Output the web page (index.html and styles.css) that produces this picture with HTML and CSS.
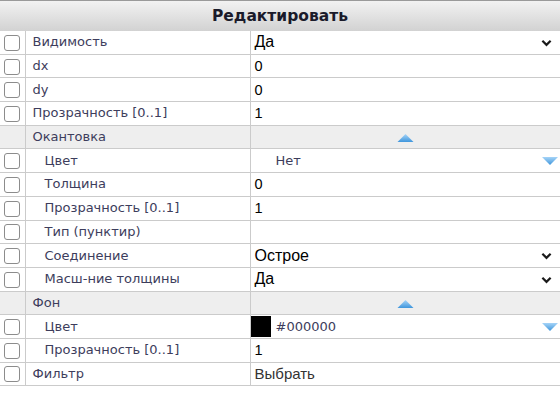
FILE: index.html
```html
<!DOCTYPE html>
<html>
<head>
    <title>Редактировать</title>
    <link rel="stylesheet" href="styles.css">
</head>
<body>
    <div class="panel">
        <div class="title">Редактировать</div>
        <table class="grid">
            <colgroup>
                <col class="c-chk">
                <col class="c-name">
                <col>
            </colgroup>
            <tr>
                <td class="chk"><span class="cb"></span></td>
                <td class="name">Видимость</td>
                <td class="val sel">Да <svg class="chev" viewBox="0 0 12 8"><path d="M1.5 1.5 L6 6 L10.5 1.5"/></svg></td>
            </tr>
            <tr>
                <td class="chk"><span class="cb"></span></td>
                <td class="name">dx</td>
                <td class="val">0</td>
            </tr>
            <tr>
                <td class="chk"><span class="cb"></span></td>
                <td class="name">dy</td>
                <td class="val">0</td>
            </tr>
            <tr>
                <td class="chk"><span class="cb"></span></td>
                <td class="name">Прозрачность [0..1]</td>
                <td class="val">1</td>
            </tr>
            <tr class="group">
                <td class="chk"></td>
                <td class="name">Окантовка</td>
                <td class="val toggle"><svg class="up" viewBox="0 0 18 9"><defs><linearGradient id="gu" x1="0" y1="0" x2="0" y2="1"><stop offset="0" stop-color="#a6d4f8"/><stop offset="1" stop-color="#3f96dc"/></linearGradient></defs><path d="M9 0 L18 9 L0 9 Z" fill="url(#gu)"/></svg></td>
            </tr>
            <tr>
                <td class="chk"><span class="cb"></span></td>
                <td class="name sub">Цвет</td>
                <td class="val color"><span class="swatch"></span><span class="ctext">Нет</span><svg class="down" viewBox="0 0 16 8"><defs><linearGradient id="gd" x1="0" y1="0" x2="0" y2="1"><stop offset="0" stop-color="#a6d4f8"/><stop offset="1" stop-color="#3f96dc"/></linearGradient></defs><path d="M0 0 L16 0 L8 8 Z" fill="url(#gd)"/></svg></td>
            </tr>
            <tr>
                <td class="chk"><span class="cb"></span></td>
                <td class="name sub">Толщина</td>
                <td class="val">0</td>
            </tr>
            <tr>
                <td class="chk"><span class="cb"></span></td>
                <td class="name sub">Прозрачность [0..1]</td>
                <td class="val">1</td>
            </tr>
            <tr>
                <td class="chk"><span class="cb"></span></td>
                <td class="name sub">Тип (пунктир)</td>
                <td class="val"></td>
            </tr>
            <tr>
                <td class="chk"><span class="cb"></span></td>
                <td class="name sub">Соединение</td>
                <td class="val sel">Острое <svg class="chev" viewBox="0 0 12 8"><path d="M1.5 1.5 L6 6 L10.5 1.5"/></svg></td>
            </tr>
            <tr>
                <td class="chk"><span class="cb"></span></td>
                <td class="name sub">Масш-ние толщины</td>
                <td class="val sel">Да <svg class="chev" viewBox="0 0 12 8"><path d="M1.5 1.5 L6 6 L10.5 1.5"/></svg></td>
            </tr>
            <tr class="group">
                <td class="chk"></td>
                <td class="name">Фон</td>
                <td class="val toggle"><svg class="up" viewBox="0 0 18 9"><path d="M9 0 L18 9 L0 9 Z" fill="url(#gu)"/></svg></td>
            </tr>
            <tr>
                <td class="chk"><span class="cb"></span></td>
                <td class="name sub">Цвет</td>
                <td class="val color"><span class="swatch black"></span><span class="ctext">#000000</span><svg class="down" viewBox="0 0 16 8"><path d="M0 0 L16 0 L8 8 Z" fill="url(#gd)"/></svg></td>
            </tr>
            <tr>
                <td class="chk"><span class="cb"></span></td>
                <td class="name sub">Прозрачность [0..1]</td>
                <td class="val">1</td>
            </tr>
            <tr>
                <td class="chk"><span class="cb"></span></td>
                <td class="name">Фильтр</td>
                <td class="val link">Выбрать</td>
            </tr>
        </table>
    </div>
</body>
</html>
```

FILE: styles.css
```css
body { margin: 0; font-family: "DejaVu Sans", Verdana, sans-serif; font-size: 13px; background: #fff; }
.panel { width: 560px; }
.title { height: 31px; line-height: 30px; text-align: center; font-weight: bold; font-size: 15.5px; color: #1a1a2a;
    background: linear-gradient(#f2f2f2, #d2d2d2); border-top: 1px solid #9a9a9a; box-sizing: border-box; }
.grid { width: 100%; border-collapse: collapse; table-layout: fixed; }
.c-chk { width: 25px; }
.c-name { width: 225px; }
.grid td { height: 22.7px; padding: 0; border: 1px solid #cbcbcb; border-top: none; white-space: nowrap; overflow: hidden; line-height: 18px; }
.grid td:first-child { border-left: none; }
.grid td:last-child { border-right: none; }
.chk { text-align: center; }
.name { padding-left: 7px !important; color: #3d3d5c; }
.name.sub { padding-left: 19px !important; }
.val { padding-left: 4px !important; color: #000; font-family: "Liberation Sans", Arial, sans-serif; font-size: 14.5px; position: relative; }
.val.sel { font-size: 16px; }
.group td { background: #eeeeee; }
.cb { display: inline-block; width: 14px; height: 14px; border: 1px solid #8c8c8c; border-radius: 3px; background: #fff; vertical-align: middle; }
.chev { position: absolute; right: 8px; top: 8px; width: 11px; height: 8px; fill: none; stroke: #1a1a1a; stroke-width: 2.4; }
.toggle { text-align: center; padding-left: 0 !important; }
.up { width: 17px; height: 8px; display: inline-block; vertical-align: middle; }
.color { padding-left: 0 !important; }
.swatch { display: inline-block; width: 22px; height: 21px; vertical-align: middle; margin-left: -2px; }
.swatch.black { background: #000; }
.ctext { margin-left: 5px; color: #3d3d5c; vertical-align: middle; font-family: "DejaVu Sans", Verdana, sans-serif; font-size: 13px; }
.down { position: absolute; right: 2px; top: 8px; width: 16px; height: 8px; }
.link { color: #333; font-size: 15px; }
```
